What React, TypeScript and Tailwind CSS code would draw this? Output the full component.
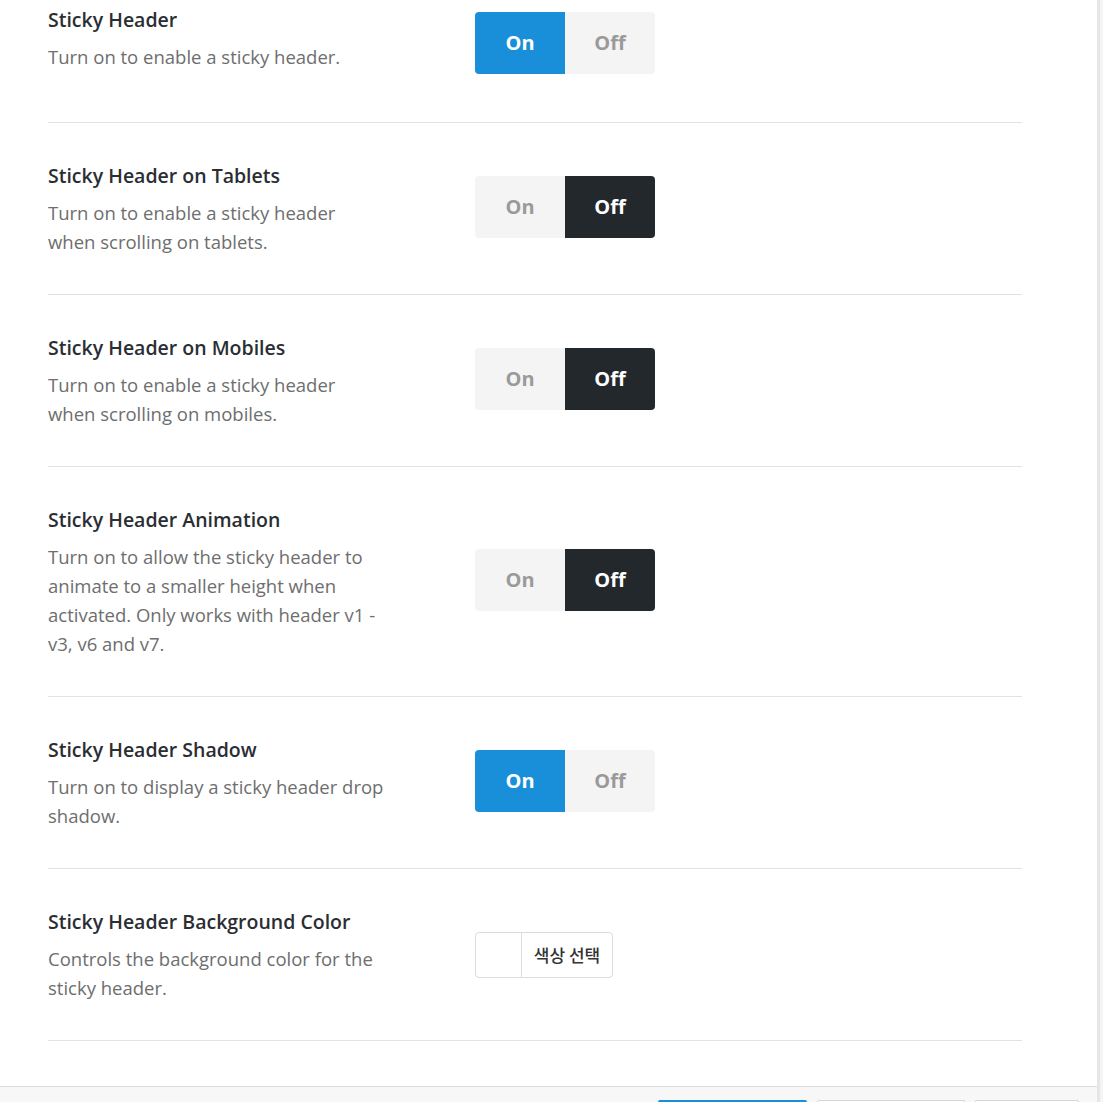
import React from "react";

type Row = {
  title: string;
  desc: string[];
  control: "on" | "off" | "color";
};

const rows: Row[] = [
  { title: "Sticky Header", desc: ["Turn on to enable a sticky header."], control: "on" },
  { title: "Sticky Header on Tablets", desc: ["Turn on to enable a sticky header", "when scrolling on tablets."], control: "off" },
  { title: "Sticky Header on Mobiles", desc: ["Turn on to enable a sticky header", "when scrolling on mobiles."], control: "off" },
  {
    title: "Sticky Header Animation",
    desc: [
      "Turn on to allow the sticky header to",
      "animate to a smaller height when",
      "activated. Only works with header v1 -",
      "v3, v6 and v7.",
    ],
    control: "off",
  },
  { title: "Sticky Header Shadow", desc: ["Turn on to display a sticky header drop", "shadow."], control: "on" },
  { title: "Sticky Header Background Color", desc: ["Controls the background color for the", "sticky header."], control: "color" },
  { title: "Sticky Header Menu Font Color", desc: ["Controls the font color for the sticky", "header menu."], control: "color" },
];

function Toggle({ on }: { on: boolean }) {
  return (
    <div className="flex h-[62px] w-[180px] overflow-hidden rounded-[4px] text-[20px] font-bold">
      <div
        className={
          on
            ? "flex w-[90px] items-center justify-center bg-[#1a8fd9] text-white"
            : "flex w-[90px] items-center justify-center bg-[#f4f4f4] text-[#9a9a9a]"
        }
      >
        On
      </div>
      <div
        className={
          on
            ? "flex w-[90px] items-center justify-center bg-[#f4f4f4] text-[#9a9a9a]"
            : "flex w-[90px] items-center justify-center bg-[#23282d] text-white"
        }
      >
        Off
      </div>
    </div>
  );
}

function ColorPick() {
  return (
    <div className="flex h-[46px] w-[138px] overflow-hidden rounded-[4px] border border-[#dcdcdc] bg-white">
      <div className="w-[46px] border-r border-[#dcdcdc]" />
      <div
        className="flex flex-1 items-center justify-center text-[17px] font-medium text-[#333]"
        style={{ fontFamily: '"Noto Sans CJK KR", "Noto Sans", sans-serif' }}
      >
        색상 선택
      </div>
    </div>
  );
}

export default function App() {
  return (
    <div
      className="relative flex h-[1102px] w-[1103px] overflow-hidden bg-white"
      style={{ fontFamily: '"Open Sans", "Noto Sans", sans-serif' }}
    >
      <div className="relative h-full w-[1097px] overflow-hidden">
        <div className="mt-[-36px] pl-[48px] pr-[75px]">
          {rows.map((r, i) => (
            <div
              key={i}
              className={
                i === 0
                  ? "flex min-h-[159px] items-center border-b border-[#e3e3e3]"
                  : "flex items-center border-b border-[#e3e3e3]"
              }
            >
              <div className={i === 0 ? "w-[427px] shrink-0 self-start pt-[42px]" : "w-[427px] shrink-0 pt-[39px] pb-[38px]"}>
                <div className="text-[19.5px] font-semibold leading-[28px] text-[#2a2e33]">{r.title}</div>
                <div className="mt-[8px] whitespace-nowrap text-[18.5px] leading-[29px] text-[#6e6e6e]">
                  {r.desc.map((l, j) => (
                    <div key={j}>{l}</div>
                  ))}
                </div>
              </div>
              <div className={r.control !== "color" && i > 0 ? "pb-[4px]" : ""}>
                {r.control === "color" ? <ColorPick /> : <Toggle on={r.control === "on"} />}
              </div>
            </div>
          ))}
        </div>
        <div className="absolute bottom-0 left-0 right-0 h-[16px] border-t border-[#dedede] bg-[#f7f7f7]">
          <div className="flex h-full items-end gap-[10px] pl-[658px]">
            <div className="h-[2px] w-[149px] rounded-t-[4px] bg-[#1a8fd9]" />
            <div className="h-[2px] w-[148px] rounded-t-[4px] border border-b-0 border-[#d6d6d6] bg-white" />
            <div className="h-[2px] w-[104px] rounded-t-[4px] border border-b-0 border-[#d6d6d6] bg-white" />
          </div>
        </div>
      </div>
      <div className="h-full w-[3px] bg-[#e6e6e6]" />
      <div className="h-full w-[3px] bg-[#f4f4f4]" />
    </div>
  );
}
